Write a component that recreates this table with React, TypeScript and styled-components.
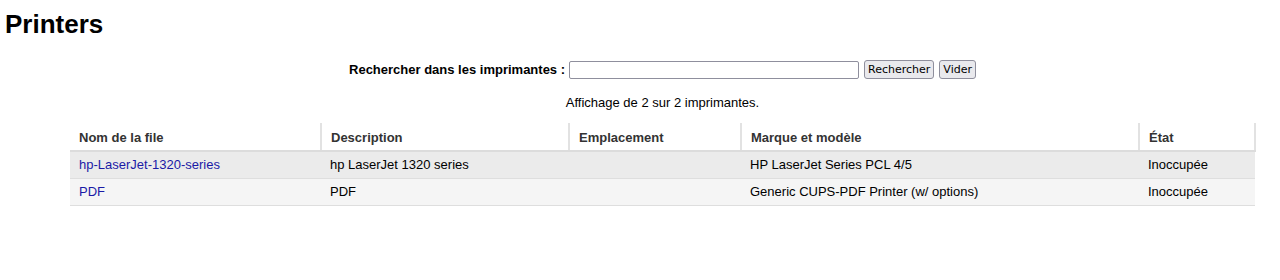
import { createGlobalStyle } from 'styled-components';
import styled from 'styled-components';

interface Printer {
    name: string;
    description: string;
    location: string;
    model: string;
    state: string;
}

const printers: Printer[] = [
    {
        name: 'hp-LaserJet-1320-series',
        description: 'hp LaserJet 1320 series',
        location: '',
        model: 'HP LaserJet Series PCL 4/5',
        state: 'Inoccupée',
    },
    {
        name: 'PDF',
        description: 'PDF',
        location: '',
        model: 'Generic CUPS-PDF Printer (w/ options)',
        state: 'Inoccupée',
    },
];

const columns = [
    { label: 'Nom de la file', width: 251 },
    { label: 'Description', width: 248 },
    { label: 'Emplacement', width: 172 },
    { label: 'Marque et modèle', width: 398 },
    { label: 'État', width: 116 },
];

const GlobalStyle = createGlobalStyle`
    html, body {
        margin: 0;
        padding: 0;
        background: #fff;
    }
    body {
        font-family: "Liberation Sans", Arial, sans-serif;
        font-size: 13px;
        color: #000;
    }
`;

const Page = styled.div`
    padding: 10px 0 0 5px;
`;

const Title = styled.h1`
    margin: 0 0 22px 0;
    font-size: 26px;
    font-weight: bold;
    line-height: 28px;
`;

const Content = styled.div`
    margin-left: 65px;
    width: 1185px;
`;

const SearchForm = styled.form`
    display: flex;
    justify-content: center;
    align-items: center;
    gap: 4px;
    margin: 0;
`;

const SearchLabel = styled.label`
    font-weight: bold;
`;

const SearchInput = styled.input`
    box-sizing: border-box;
    width: 290px;
    height: 18px;
    padding: 1px 2px;
    border: 1px solid #8f8f9d;
    border-radius: 2px;
    font: inherit;
`;

const Button = styled.button`
    box-sizing: border-box;
    font-family: "DejaVu Sans", sans-serif;
    font-size: 11px;
    height: 19px;
    padding: 0 3px;
    margin-left: 1px;
    border: 1px solid #8f8f9d;
    border-radius: 3px;
    background: #e9e9ed;
    color: #000;
    line-height: 16px;
`;

const Summary = styled.p`
    text-align: center;
    margin: 16px 0 13px 0;
`;

const Table = styled.table`
    width: 100%;
    border-collapse: collapse;
    table-layout: fixed;
`;

const HeadCell = styled.th<{ $w: number }>`
    box-sizing: border-box;
    width: ${({ $w }) => $w}px;
    height: 28px;
    padding: 1px 9px 0 9px;
    text-align: left;
    font-weight: bold;
    color: #333;
    border-right: 2px solid #e2e2e2;
    border-bottom: 2px solid #dcdcdc;
`;

const Row = styled.tr<{ $odd: boolean }>`
    background: ${({ $odd }) => ($odd ? '#ebebeb' : '#f5f5f5')};
    border-bottom: 1px solid #dedede;
`;

const Cell = styled.td`
    box-sizing: border-box;
    height: 27px;
    padding: 0 9px;
`;

const QueueLink = styled.a`
    color: #1a1aa6;
    text-decoration: none;
`;

export default function App() {
    return (
        <Page>
            <GlobalStyle />
            <Title>Printers</Title>
            <Content>
                <SearchForm onSubmit={(e) => e.preventDefault()}>
                    <SearchLabel htmlFor='query'>Rechercher dans les imprimantes :</SearchLabel>
                    <SearchInput id='query' type='search' />
                    <Button type='submit'>Rechercher</Button>
                    <Button type='button'>Vider</Button>
                </SearchForm>
                <Summary>Affichage de 2 sur 2 imprimantes.</Summary>
                <Table>
                    <thead>
                        <tr>
                            {columns.map((col) => (
                                <HeadCell key={col.label} $w={col.width}>{col.label}</HeadCell>
                            ))}
                        </tr>
                    </thead>
                    <tbody>
                        {printers.map((p, i) => (
                            <Row key={p.name} $odd={i % 2 === 0}>
                                <Cell><QueueLink href='#'>{p.name}</QueueLink></Cell>
                                <Cell>{p.description}</Cell>
                                <Cell>{p.location}</Cell>
                                <Cell>{p.model}</Cell>
                                <Cell>{p.state}</Cell>
                            </Row>
                        ))}
                    </tbody>
                </Table>
            </Content>
        </Page>
    );
}
